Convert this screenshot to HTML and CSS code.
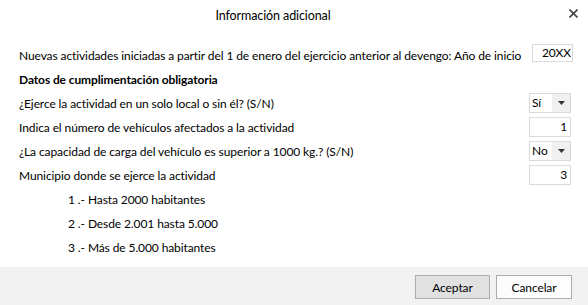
FILE: index.html
```html
<!DOCTYPE html>
<html lang="es">
<head>
<meta charset="utf-8">
<title>Información adicional</title>
<link rel="stylesheet" href="styles.css">
</head>
<body>
<div class="dialog">
  <header class="header">
    <div class="title">Información adicional</div>
    <button class="close" aria-label="Cerrar">
      <svg width="9" height="9" viewBox="0 0 9 9"><path d="M0.5 0.5L8.5 8.5M8.5 0.5L0.5 8.5" stroke="#444" stroke-width="1.6"/></svg>
    </button>
  </header>
  <main class="content">
    <div class="row">
      <span class="label">Nuevas actividades iniciadas a partir del 1 de enero del ejercicio anterior al devengo: Año de inicio</span>
      <div class="field field-year">20XX</div>
    </div>
    <div class="row"><span class="label bold">Datos de cumplimentación obligatoria</span></div>
    <div class="row">
      <span class="label">¿Ejerce la actividad en un solo local o sin él? (S/N)</span>
      <div class="select"><span class="sel-val">Sí</span><span class="sel-arrow"><svg width="7" height="4" viewBox="0 0 7 4"><path d="M0 0H7L3.5 4Z" fill="#333"/></svg></span></div>
    </div>
    <div class="row">
      <span class="label">Indica el número de vehículos afectados a la actividad</span>
      <div class="field">1</div>
    </div>
    <div class="row">
      <span class="label">¿La capacidad de carga del vehículo es superior a 1000 kg.? (S/N)</span>
      <div class="select"><span class="sel-val">No</span><span class="sel-arrow"><svg width="7" height="4" viewBox="0 0 7 4"><path d="M0 0H7L3.5 4Z" fill="#333"/></svg></span></div>
    </div>
    <div class="row">
      <span class="label">Municipio donde se ejerce la actividad</span>
      <div class="field">3</div>
    </div>
    <div class="row indent"><span class="label">1 .- Hasta 2000 habitantes</span></div>
    <div class="row indent"><span class="label">2 .- Desde 2.001 hasta 5.000</span></div>
    <div class="row indent"><span class="label">3 .- Más de 5.000 habitantes</span></div>
  </main>
  <footer class="footer">
    <button class="btn btn-primary">Aceptar</button>
    <button class="btn">Cancelar</button>
  </footer>
</div>
</body>
</html>
```
FILE: styles.css
```css
* { box-sizing: border-box; }
html, body { margin: 0; padding: 0; }
body {
  width: 588px;
  height: 305px;
  background: #fff;
  font-family: Lato, "Noto Sans", sans-serif;
  font-size: 12px;
  letter-spacing: -0.1px;
  color: #000;
  overflow: hidden;
}
.dialog {
  display: flex;
  flex-direction: column;
  height: 305px;
}
.header {
  display: flex;
  align-items: center;
  height: 30px;
}
.title {
  flex: 1;
  text-align: center;
  font-size: 12.5px;
}
.close {
  width: 42px;
  height: 30px;
  border: 0;
  background: transparent;
  padding: 0 10px 4px 0;
  display: flex;
  align-items: center;
  justify-content: flex-end;
}
.close svg { display: block; }
.content {
  flex: 1;
  padding: 13px 17px 0 19px;
}
.row {
  display: flex;
  align-items: center;
  justify-content: space-between;
  height: 24px;
}
.label { white-space: nowrap; }
.bold { font-weight: bold; }
.indent { padding-left: 49px; }
.field {
  width: 42px;
  height: 20px;
  border: 1px solid #dadada;
  text-align: right;
  padding-right: 3px;
  line-height: 18px;
}
.field-year {
  width: 41px;
  height: 18px;
  margin-right: -2px;
  line-height: 16px;
  padding-right: 1px;
  margin-top: -5px;
}
.select {
  width: 42px;
  height: 20px;
  border: 1px solid #dadada;
  display: flex;
}
.sel-val {
  flex: 1;
  padding-left: 2px;
  line-height: 18px;
}
.sel-arrow {
  width: 18px;
  background: #f0f0f0;
  display: flex;
  align-items: center;
  justify-content: center;
}
.footer {
  height: 38px;
  background: #f2f2f2;
  display: flex;
  justify-content: flex-end;
  align-items: flex-start;
  gap: 6px;
  padding: 8px 16px 0 0;
}
.btn {
  width: 76px;
  height: 24px;
  border: 1px solid #adadad;
  background: #fdfdfd;
  font-family: inherit;
  font-size: 12px;
  letter-spacing: inherit;
  color: #000;
  padding: 0;
}
.btn-primary {
  width: 75px;
  background: #e1e1e1;
}
```
